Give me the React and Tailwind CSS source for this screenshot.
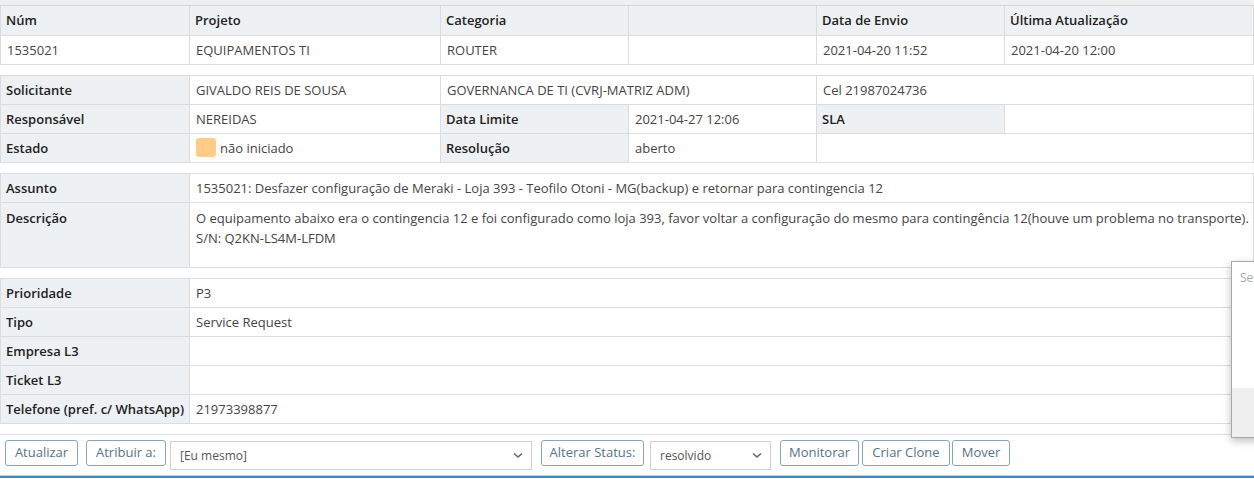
import React from 'react';

const th = 'border border-[#dcdcdc] bg-[#edf1f3] px-[5px] h-[29px] py-0 leading-[20px] text-left font-semibold text-[#222] whitespace-nowrap';
const td = 'border border-[#dcdcdc] bg-white px-[6px] h-[29px] py-0 leading-[20px] text-[#444] font-normal whitespace-nowrap';
const thTop = `${th} border-t-0`;

const Cols = () => (
  <colgroup>
    <col className="w-[189px]" />
    <col className="w-[251px]" />
    <col className="w-[188px]" />
    <col className="w-[188px]" />
    <col className="w-[188px]" />
    <col />
  </colgroup>
);

const Btn = ({ children, className }) => (
  <button className={`h-[26px] border border-[#86a5bb] rounded-[3px] bg-white text-[#557488] text-[13px] leading-none text-center shrink-0 ${className}`}>
    {children}
  </button>
);

const Select = ({ value, className }) => (
  <div className={`h-[29px] border border-[#d0d0d0] bg-white flex items-center justify-between pl-[9px] pr-[8px] text-[#555] text-[12px] mt-[1px] shrink-0 ${className}`}>
    <span className="pt-[2px]">{value}</span>
    <svg width="10" height="7" viewBox="0 0 10 7">
      <path d="M1 1.5 L5 5 L9 1.5" stroke="#666" strokeWidth="1.6" fill="none" />
    </svg>
  </div>
);

export default function App() {
  return (
    <div className="relative w-[1254px] h-[479px] overflow-hidden bg-white text-[13px] font-['Open_Sans',sans-serif]">
      <div className="h-[6px] bg-[#efefef] border-b border-[#d4d4d4]" />

      <table className="w-full table-fixed">
        <Cols />
        <tbody>
          <tr>
            <th className={thTop}>Núm</th>
            <th className={thTop}>Projeto</th>
            <th className={thTop}>Categoria</th>
            <th className={thTop}></th>
            <th className={thTop}>Data de Envio</th>
            <th className={thTop}>Última Atualização</th>
          </tr>
          <tr>
            <td className={td}>1535021</td>
            <td className={td}>EQUIPAMENTOS TI</td>
            <td className={td}>ROUTER</td>
            <td className={td}></td>
            <td className={td}>2021-04-20 11:52</td>
            <td className={td}>2021-04-20 12:00</td>
          </tr>
        </tbody>
      </table>

      <table className="w-full table-fixed mt-[10px]">
        <Cols />
        <tbody>
          <tr>
            <th className={th}>Solicitante</th>
            <td className={td}>GIVALDO REIS DE SOUSA</td>
            <td className={td} colSpan={2}>GOVERNANCA DE TI (CVRJ-MATRIZ ADM)</td>
            <td className={td} colSpan={2}>Cel 21987024736</td>
          </tr>
          <tr>
            <th className={th}>Responsável</th>
            <td className={td}>NEREIDAS</td>
            <th className={th}>Data Limite</th>
            <td className={td}>2021-04-27 12:06</td>
            <th className={th}>SLA</th>
            <td className={td}></td>
          </tr>
          <tr>
            <th className={th}>Estado</th>
            <td className={td}>
              <div className="flex items-center gap-[4px]">
                <span className="inline-block w-[20px] h-[19px] rounded-[3px] bg-[#ffcc88]" />
                <span>não iniciado</span>
              </div>
            </td>
            <th className={th}>Resolução</th>
            <td className={td}>aberto</td>
            <td className={td} colSpan={2}></td>
          </tr>
        </tbody>
      </table>

      <table className="w-full table-fixed mt-[10px]">
        <colgroup>
          <col className="w-[189px]" />
          <col />
        </colgroup>
        <tbody>
          <tr>
            <th className={th}>Assunto</th>
            <td className={td}>
              1535021: Desfazer configuração de Meraki - Loja 393 - Teofilo Otoni - MG(backup) e retornar para contingencia 12
            </td>
          </tr>
          <tr>
            <th className={`${th} align-top pt-[5px] h-[65px]`}>Descrição</th>
            <td className={`${td} align-top pt-[5px] h-[65px] leading-[19px] overflow-hidden`}>
              O equipamento abaixo era o contingencia 12 e foi configurado como loja 393, favor voltar a configuração do mesmo para contingência 12(houve um problema no transporte).
              <br />
              S/N: Q2KN-LS4M-LFDM
            </td>
          </tr>
        </tbody>
      </table>

      <table className="w-full table-fixed mt-[10px]">
        <colgroup>
          <col className="w-[189px]" />
          <col />
        </colgroup>
        <tbody>
          <tr>
            <th className={th}>Prioridade</th>
            <td className={td}>P3</td>
          </tr>
          <tr>
            <th className={th}>Tipo</th>
            <td className={td}>Service Request</td>
          </tr>
          <tr>
            <th className={th}>Empresa L3</th>
            <td className={td}></td>
          </tr>
          <tr>
            <th className={th}>Ticket L3</th>
            <td className={td}></td>
          </tr>
          <tr>
            <th className={th}>Telefone (pref. c/ WhatsApp)</th>
            <td className={td}>21973398877</td>
          </tr>
        </tbody>
      </table>

      <div className="mt-[10px] border-t border-[#dcdcdc] h-[41px] flex items-start pl-[5px] pt-[5px]">
        <Btn className="w-[73px]">Atualizar</Btn>
        <Btn className="w-[80px] ml-[8px]">Atribuir a:</Btn>
        <Select value="[Eu mesmo]" className="w-[362px] ml-[4px]" />
        <Btn className="w-[103px] ml-[9px]">Alterar Status:</Btn>
        <Select value="resolvido" className="w-[121px] ml-[6px]" />
        <Btn className="w-[79px] ml-[9px]">Monitorar</Btn>
        <Btn className="w-[88px] ml-[3px]">Criar Clone</Btn>
        <Btn className="w-[58px] ml-[2px]">Mover</Btn>
      </div>
      <div className="border-t border-[#d0d0d0] h-[3px] bg-[#3d87c4]" />

      <div className="absolute left-[1231px] top-[261px] w-[300px] h-[177px] border border-[#a8a8a8] bg-white shadow-[0_3px_8px_rgba(0,0,0,0.25)] flex flex-col">
        <div className="flex-1 pl-[8px] pt-[7px] text-[12px] text-[#aaa] whitespace-nowrap">Serviço</div>
        <div className="h-[49px] bg-[#efefef]" />
      </div>
    </div>
  );
}
